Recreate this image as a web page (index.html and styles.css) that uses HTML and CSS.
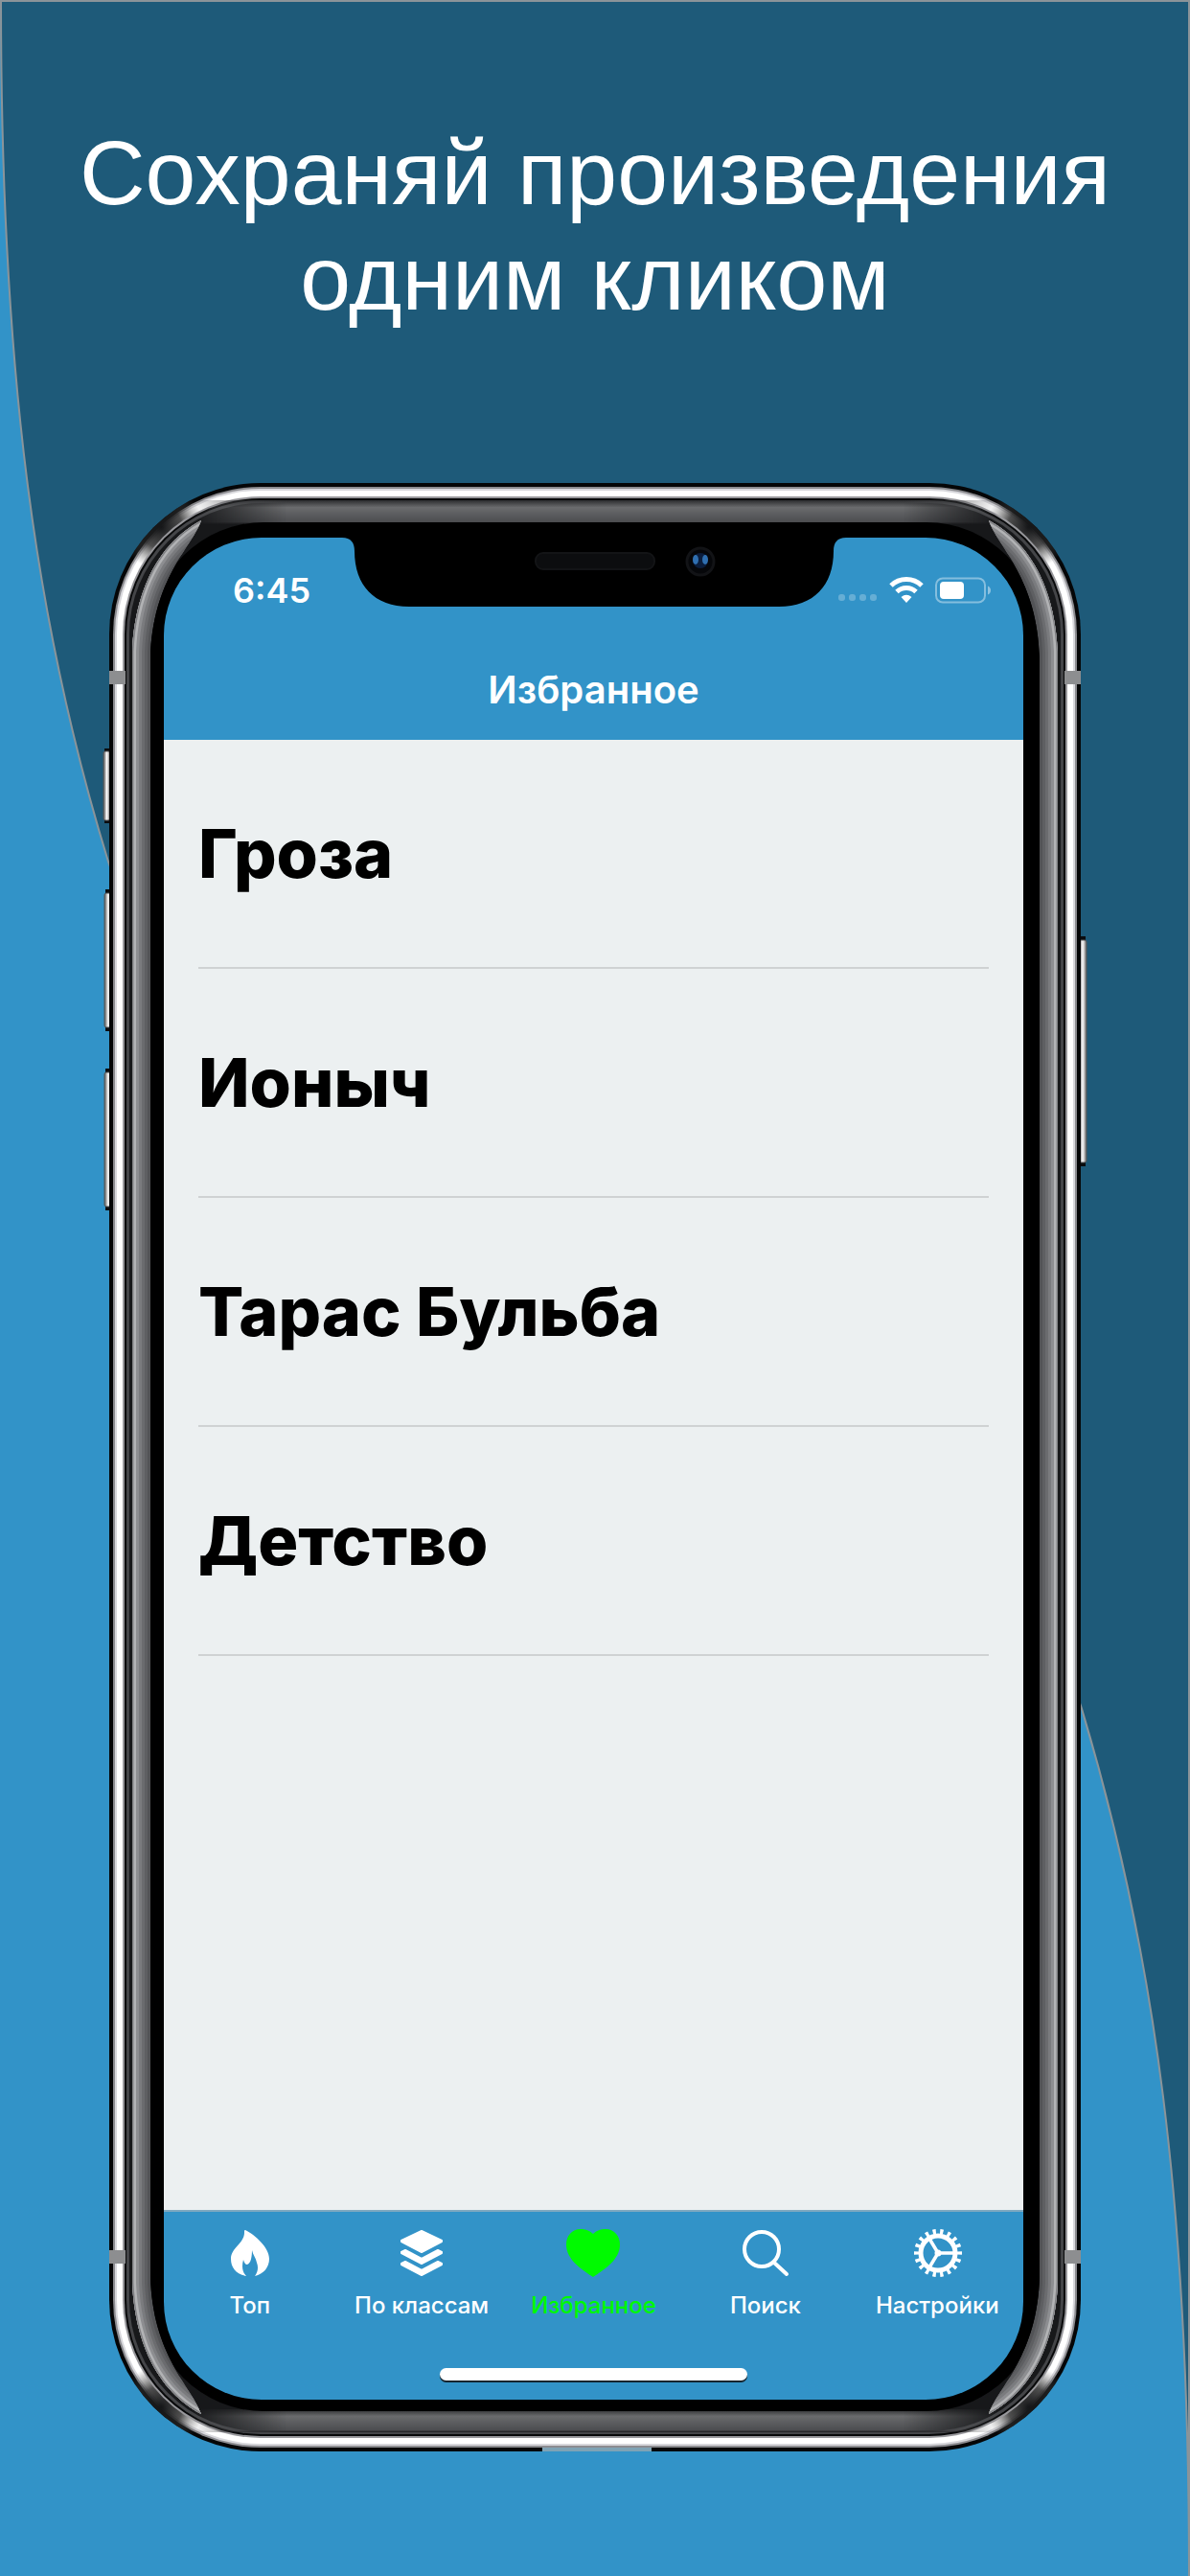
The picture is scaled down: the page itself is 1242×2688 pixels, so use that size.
FILE: index.html
```html
<!DOCTYPE html>
<html lang="ru">
<head>
<meta charset="utf-8">
<meta name="viewport" content="width=device-width, initial-scale=1">
<title>Избранное</title>
<link rel="stylesheet" href="styles.css">
</head>
<body>
<div class="poster">
  <svg class="backdrop" viewBox="0 0 1242 2688" preserveAspectRatio="none" aria-hidden="true">
    <path d="M1 1C1 385 36 649 113 899C290 1440 952 1248 1129 1783C1206 2039 1241 2303 1241 2688V1Z" fill="#1e5a79" stroke="#8b9499" stroke-width="2"/>
  </svg>

  <h1 class="headline">Сохраняй произведения<br>одним кликом</h1>

  <div class="device">
    <svg class="frame" viewBox="0 0 1030 2054" preserveAspectRatio="none" aria-hidden="true">
      <defs>
        <linearGradient id="lip" x2="0" y2="1"><stop offset="0" stop-color="#2c2d2f"/><stop offset=".3" stop-color="#6a6b6d"/><stop offset=".9" stop-color="#4c4d50"/><stop offset="1" stop-color="#1c1c1e"/></linearGradient>
        <linearGradient id="key"><stop offset="0" stop-color="#555"/><stop offset=".5" stop-color="#fff"/><stop offset="1" stop-color="#666"/></linearGradient>
        <linearGradient id="ends"><stop offset="0" stop-color="#000"/><stop offset=".12" stop-color="#fff"/><stop offset=".88" stop-color="#fff"/><stop offset="1" stop-color="#000"/></linearGradient>
        <radialGradient id="shade"><stop offset="0" stop-color="#151618"/><stop offset=".5" stop-color="#222" stop-opacity=".8"/><stop offset="1" stop-color="#555" stop-opacity="0"/></radialGradient>
        <clipPath id="body"><rect x="8" width="1014" height="2054" rx="158"/></clipPath>
        <mask id="fade"><rect x="92" width="846" height="2054" fill="url(#ends)"/></mask>
        <path id="rail" d="M32 176C34 128 50 68 104 39C94 68 53 100 51 183V1871C53 1954 94 1986 104 2015C50 1986 34 1926 32 1878Z"/>
        <path id="edge" d="M104 39C50 68 34 128 32 176V1878C34 1926 50 1986 104 2015"/>
        <clipPath id="railclip"><use href="#rail"/></clipPath>
        <g id="band" clip-path="url(#railclip)" fill="none">
          <use href="#rail" fill="#525356"/>
          <use href="#edge" stroke="#5e5f62" stroke-width="32"/>
          <use href="#edge" stroke="#6b6c6f" stroke-width="26"/>
          <use href="#edge" stroke="#7a7b7e" stroke-width="20"/>
          <use href="#edge" stroke="#8d8e91" stroke-width="14"/>
          <use href="#edge" stroke="#b2b3b5" stroke-width="8"/>
          <use href="#edge" stroke="#808184" stroke-width="3"/>
        </g>
      </defs>
      <g fill="#0b0c0e">
        <rect x="3" y="277" width="9" height="78"/>
        <rect x="4" y="424" width="9" height="148"/>
        <rect x="4" y="611" width="9" height="148"/>
        <rect x="1016" y="473" width="11" height="240"/>
      </g>
      <g fill="url(#key)" stroke="#55585a" stroke-width="1">
        <rect x="2" y="280" width="7" height="72" rx="2"/>
        <rect x="3" y="428" width="8" height="140" rx="2"/>
        <rect x="3" y="615" width="8" height="140" rx="2"/>
        <rect x="1020" y="477" width="8" height="232" rx="2"/>
      </g>
      <rect x="8" width="1014" height="2054" rx="158" fill="#050607"/>
      <rect x="12" y="4" width="1006" height="2046" rx="154" fill="#8c8c90"/>
      <rect x="14" y="6" width="1002" height="2042" rx="152" fill="#d8d8dc"/>
      <rect x="16" y="8" width="998" height="2038" rx="150" fill="#fff"/>
      <g fill="url(#shade)" clip-path="url(#body)">
        <circle cx="62" cy="46" r="44"/><circle cx="968" cy="46" r="44"/>
        <circle cx="62" cy="2008" r="44"/><circle cx="968" cy="2008" r="44"/>
      </g>
      <rect x="22" y="14" width="986" height="2026" rx="144" fill="#98989c"/>
      <rect x="24" y="16" width="982" height="2022" rx="142" fill="#08090a"/>
      <rect x="26" y="18" width="978" height="2018" rx="140" fill="#444548"/>
      <rect x="29" y="21" width="972" height="2012" rx="137" fill="#17181a"/>
      <g mask="url(#fade)" fill="url(#lip)">
        <rect x="92" y="18" width="846" height="25"/>
        <rect x="92" y="2010" width="846" height="24"/>
      </g>
      <rect x="51" y="41" width="928" height="1971" rx="118" fill="#000"/>
      <use href="#band"/>
      <use href="#band" transform="translate(1030 0) scale(-1 1)"/>
      <g fill="#8d8e90">
        <rect x="8" y="196" width="17" height="14"/><rect x="1005" y="196" width="17" height="14"/>
        <rect x="8" y="1844" width="17" height="14"/><rect x="1005" y="1844" width="17" height="14"/>
      </g>
      <rect x="460" y="2050" width="114" height="4" fill="#7fa3b5"/>
    </svg>

    <div class="screen">
      <svg class="notch" viewBox="0 0 526 72" aria-hidden="true">
        <path d="M0 0C9 0 13 5 13 14C13 50 34 72 70 72H456C492 72 513 50 513 14C513 5 517 0 526 0Z" fill="#000"/>
        <rect x="202" y="16" width="124" height="17" rx="8" fill="#0c0d0f" stroke="#131416" stroke-width="2"/>
        <circle cx="374" cy="25" r="14" fill="#06070a" stroke="#121316" stroke-width="3"/>
        <circle cx="374" cy="24" r="8" fill="#0b1d3c"/>
        <ellipse cx="369" cy="23" rx="3" ry="5" fill="#2f6fb0"/><ellipse cx="379" cy="23" rx="3" ry="5" fill="#2f6fb0"/>
      </svg>

      <div class="status">
        <span class="time">6:45</span>
        <svg class="signals" width="160" height="28" viewBox="0 0 160 28" aria-hidden="true">
          <g fill="#fff" opacity=".25"><rect x="1" y="18" width="7" height="7" rx="3"/><rect x="12" y="18" width="7" height="7" rx="3"/><rect x="23" y="18" width="7" height="7" rx="3"/><rect x="34" y="18" width="7" height="7" rx="3"/></g>
          <g fill="none" stroke="#fff" stroke-width="5"><path d="M56 9A23 23 0 0 1 88 9"/><path d="M62 15.500A14.500 14.500 0 0 1 82 15.500"/></g>
          <path d="M66.500 21Q72 16.500 77.500 21L72 27Z" fill="#fff"/>
          <rect x="103" y="1.500" width="51" height="25" rx="7" fill="none" stroke="#fff" stroke-opacity=".4" stroke-width="2"/>
          <rect x="107" y="5" width="25" height="18" rx="4" fill="#fff"/>
          <path d="M157 9.500Q160 11 160 14T157 18.500Z" fill="#fff" opacity=".45"/>
        </svg>
      </div>

      <header class="navbar"><h2 class="title">Избранное</h2></header>

      <main class="content">
        <ul class="works">
          <li class="work">Гроза</li>
          <li class="work">Ионыч</li>
          <li class="work">Тарас Бульба</li>
          <li class="work">Детство</li>
        </ul>
      </main>

      <nav class="tabs">
        <a class="tab" href="#top">
          <svg class="icon" viewBox="0 0 60 52" aria-hidden="true"><path fill="currentColor" d="M25 2C35 7 50 20 50 32C50 41 44 48 35 50C38 46 39 41 37 36C36 31 33 28 32 23C32 29 31 37 27 38C25 38 24 36 23 33C21 40 22 46 26 50C15 48 10 41 10 32C10 20 25 16 24 3Q24 2 25 2Z"/></svg>
          <span>Топ</span>
        </a>
        <a class="tab" href="#classes">
          <svg class="icon" viewBox="0 0 60 52" aria-hidden="true"><g fill="currentColor" stroke="currentColor" stroke-width="2" stroke-linejoin="round"><path d="M30 3L51 13V14L30 25L9 14V13Z"/><path d="M9 25L13 23L30 32L47 23L51 25V26L30 37L9 26Z"/><path d="M9 37L13 35L30 44L47 35L51 37V38L30 49L9 38Z"/></g></svg>
          <span>По классам</span>
        </a>
        <a class="tab tab-current" href="#favorites" aria-current="page">
          <svg class="icon" viewBox="0 0 60 52" aria-hidden="true"><path fill="currentColor" d="M30 6C34 2 39 1 43 1C52 1 58 8 58 17C58 33 42 43 30 51C18 43 2 33 2 17C2 8 8 1 17 1C21 1 26 2 30 6Z"/></svg>
          <span>Избранное</span>
        </a>
        <a class="tab" href="#search">
          <svg class="icon" viewBox="0 0 60 52" aria-hidden="true"><g fill="none" stroke="currentColor" stroke-linecap="round"><circle cx="26" cy="22" r="18" stroke-width="4"/><path d="M39 36L52 48" stroke-width="4"/></g></svg>
          <span>Поиск</span>
        </a>
        <a class="tab" href="#settings">
          <svg class="icon" viewBox="0 0 60 52" aria-hidden="true"><g fill="none" stroke="currentColor"><circle cx="31" cy="26" r="18" stroke-width="5"/><circle cx="31" cy="26" r="22.500" stroke-width="5" pathLength="72" stroke-dasharray="1.700 2.300" stroke-dashoffset=".85"/><path d="M31 26H48M31 26L22 11M31 26L22 41" stroke-width="3.500"/></g><circle cx="31" cy="26" r="3.500" fill="currentColor"/></svg>
          <span>Настройки</span>
        </a>
      </nav>
      <div class="home"><div class="home-bar"></div></div>
    </div>
  </div>
</div>
</body>
</html>
```

FILE: styles.css
```css
* { box-sizing: border-box; }

body {
  margin: 0;
  background: #3293c8;
}

.poster {
  position: relative;
  display: flex;
  flex-direction: column;
  align-items: center;
  min-height: 100vh;
  padding: 125px 24px 130px;
}

.backdrop {
  position: absolute;
  inset: 0;
  width: 100%;
  height: 100%;
}

.headline {
  position: relative;
  margin: 0 0 159px;
  color: #fff;
  font: 400 95px/110px "Liberation Sans", Arial, sans-serif;
  text-align: center;
}

.device {
  position: relative;
  display: flex;
  flex: 1;
  width: 100%;
  max-width: 1030px;
  padding: 57px 68px 54px 65px;
}

.frame {
  position: absolute;
  inset: 0;
  width: 100%;
  height: 100%;
}

.screen {
  position: relative;
  display: flex;
  flex: 1;
  flex-direction: column;
  overflow: hidden;
  border-radius: 102px;
  background: #3293c8;
  color: #fff;
  font-family: Inter, "Noto Sans", sans-serif;
}

.notch {
  position: absolute;
  top: 0;
  left: 50%;
  width: 526px;
  transform: translateX(-50%);
}

.status {
  display: flex;
  align-items: center;
  justify-content: space-between;
  height: 110px;
  padding: 0 34px 0 72px;
}

.time {
  font-size: 36px;
  font-weight: 600;
}

.navbar {
  display: flex;
  align-items: center;
  justify-content: center;
  height: 101px;
  padding-bottom: 4px;
}

.title {
  margin: 0;
  font-size: 40px;
  font-weight: 600;
}

.content {
  flex: 1;
  padding: 0 36px;
  background: #ecf0f1;
  color: #000;
}

.works {
  margin: 0;
  padding: 0;
  list-style: none;
}

.work {
  display: flex;
  align-items: center;
  height: 239px;
  border-bottom: 2px solid #cfd2d3;
  font-size: 70px;
  font-weight: 800;
}

.tabs {
  display: grid;
  grid-template-columns: repeat(5, 1fr);
  padding-top: 17px;
  border-top: 2px solid #7fa9c0;
}

.tab {
  display: flex;
  flex-direction: column;
  align-items: center;
  gap: 14px;
  color: #fff;
  font-size: 24px;
  font-weight: 500;
  line-height: 30px;
  text-decoration: none;
  white-space: nowrap;
}

.tab-current { color: #00fa00; }

.icon {
  width: 60px;
  height: 52px;
}

.home {
  display: flex;
  justify-content: center;
  padding: 50px 0 20px;
}

.home-bar {
  width: 321px;
  height: 13px;
  border-radius: 7px;
  background: #fff;
  box-shadow: 0 2px 0 #16242e;
}
```
